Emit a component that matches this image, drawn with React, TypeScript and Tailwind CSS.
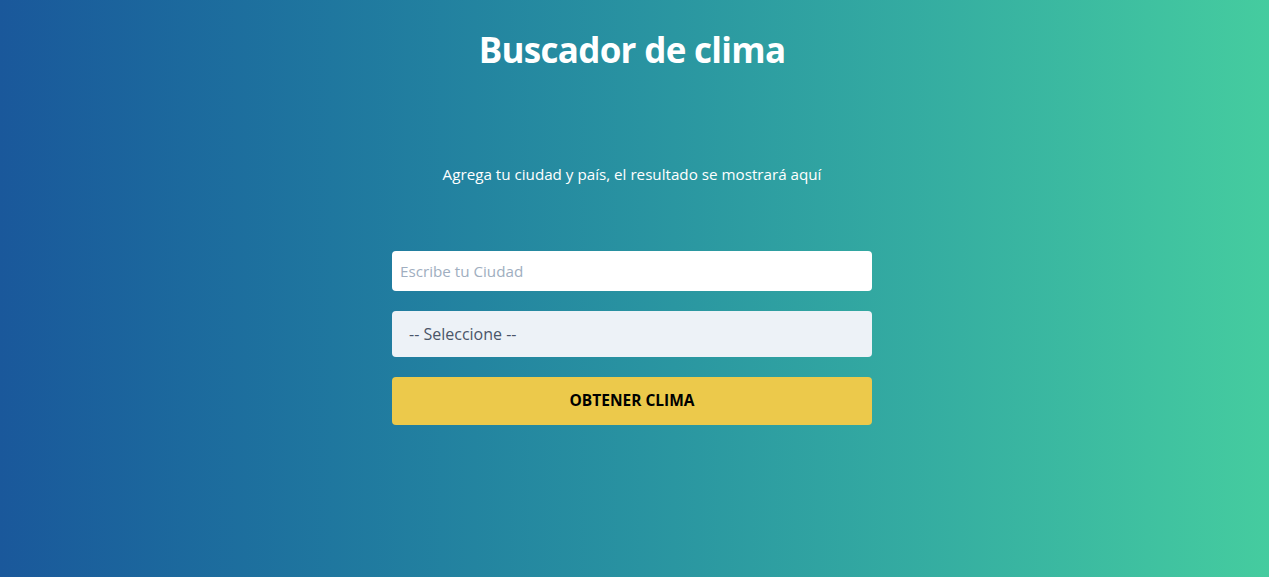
import { useState } from "react";

const paises = [
  { code: "US", name: "Estados Unidos" },
  { code: "MX", name: "México" },
  { code: "AR", name: "Argentina" },
  { code: "CO", name: "Colombia" },
  { code: "CR", name: "Costa Rica" },
  { code: "ES", name: "España" },
  { code: "PE", name: "Perú" },
];

export default function App() {
  const [ciudad, setCiudad] = useState("");
  const [pais, setPais] = useState("");

  return (
    <div
      className="min-h-screen w-full bg-gradient-to-r from-[#1a589b] to-[#45cc9f] text-white"
      style={{ fontFamily: "'Open Sans', 'Noto Sans', sans-serif" }}
    >
      <div className="pr-[5px]">
        <header className="pt-[25px] text-center">
          <h1 className="text-[35px] font-bold leading-[50px] tracking-[-0.7px]">Buscador de clima</h1>
        </header>

        <main className="mx-auto flex w-[480px] flex-col items-center">
          <p className="mt-[88px] text-[15.2px] leading-[22px]">
            Agrega tu ciudad y país, el resultado se mostrará aquí
          </p>

          <form className="mt-[66px] flex w-full flex-col gap-5" onSubmit={(e) => e.preventDefault()}>
            <input
              type="text"
              value={ciudad}
              onChange={(e) => setCiudad(e.target.value)}
              placeholder="Escribe tu Ciudad"
              className="h-10 w-full rounded bg-white px-2 text-[15.2px] text-[#4a5568] placeholder-[#a0aec0] outline-none"
            />
            <select
              value={pais}
              onChange={(e) => setPais(e.target.value)}
              className="h-[46px] w-full appearance-none rounded bg-[#edf2f7] pl-[17px] pr-4 text-[16px] text-[#4a5568] outline-none"
            >
              <option value="">-- Seleccione --</option>
              {paises.map((p) => (
                <option key={p.code} value={p.code}>{p.name}</option>
              ))}
            </select>
            <button
              type="submit"
              className="h-12 w-full rounded bg-[#ecc94b] text-[15.5px] font-bold uppercase text-black"
            >
              Obtener clima
            </button>
          </form>
        </main>
      </div>
    </div>
  );
}
